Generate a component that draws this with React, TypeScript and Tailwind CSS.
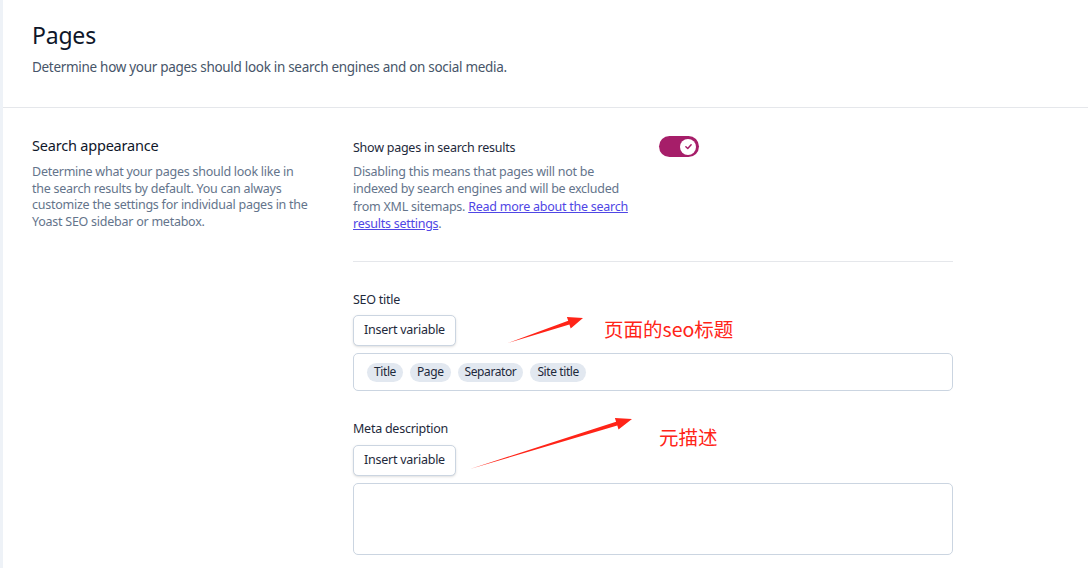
import React from "react";

const Pill = ({ label }: { label: string }) => (
  <span className="rounded-full bg-[#e2e8f0] px-[7px] h-[19px] flex items-center text-[12px] tracking-[-0.4px] text-[#1e293b]">
    {label}
  </span>
);

const InsertButton = () => (
  <button className="h-[31px] px-[10px] rounded-[5px] border border-[#cbd5e1] bg-white text-[12.5px] tracking-[-0.25px] text-[#1e293b] shadow-sm">
    Insert variable
  </button>
);

const Toggle = () => (
  <div className="w-[40px] h-[21px] rounded-full bg-[#a61e69] flex items-center justify-end px-[3px] shrink-0">
    <div className="w-[16px] h-[16px] rounded-full bg-white flex items-center justify-center">
      <svg width="9" height="9" viewBox="0 0 12 12" fill="none">
        <path d="M2.5 6.3 L5 8.6 L9.5 3.6" stroke="#a61e69" strokeWidth="2" strokeLinecap="round" strokeLinejoin="round" />
      </svg>
    </div>
  </div>
);

const Annotations = () => (
  <div className="absolute inset-0 pointer-events-none">
    <svg className="absolute left-0 top-0" width="1088" height="568">
      <polygon
        fill="#ff2418"
        points="508,343 568.2,320.8 566.9,317 583,318 570.7,328.4 569.4,324.6"
      />
      <polygon
        fill="#ff2418"
        points="470,469 616.1,421.8 614.9,418 632,419 618.5,429.4 617.3,425.6"
      />
    </svg>
    <div
      className="absolute left-[604px] top-[316px] text-[19.5px] leading-[26px] text-[#ff2418]"
      style={{ fontFamily: '"Noto Sans CJK SC", sans-serif' }}
    >
      页面的seo标题
    </div>
    <div
      className="absolute left-[659px] top-[424px] text-[19.5px] leading-[26px] text-[#ff2418]"
      style={{ fontFamily: '"Noto Sans CJK SC", sans-serif' }}
    >
      元描述
    </div>
  </div>
);

export default function App() {
  return (
    <div
      className="relative w-[1088px] h-[568px] overflow-hidden bg-white flex"
      style={{ fontFamily: '"Noto Sans", "Noto Sans CJK SC", sans-serif' }}
    >
      <div className="w-[3px] bg-[#eef2f7] shrink-0" />
      <div className="flex-1 flex flex-col">
        <header className="pl-[29px] pt-[19px] pb-[30px] border-b border-[#e5e7eb]">
          <h1 className="text-[23px] leading-[32px] tracking-[-0.2px] text-[#0f172a]">Pages</h1>
          <p className="mt-[6px] text-[13.5px] leading-[20px] tracking-[-0.3px] text-[#475569]">
            Determine how your pages should look in search engines and on social media.
          </p>
        </header>

        <section className="flex pl-[29px] pt-[26px]">
          <div className="w-[280px] shrink-0">
            <h2 className="text-[14.5px] leading-[22px] tracking-[-0.2px] text-[#0f172a]">Search appearance</h2>
            <p className="mt-[8px] text-[12.5px] leading-[16.6px] tracking-[-0.25px] text-[#64748b]">
              Determine what your pages should look like in the search results by default. You can always
              customize the settings for individual pages in the Yoast SEO sidebar or metabox.
            </p>
          </div>

          <div className="ml-[41px] w-[600px]">
            <div className="flex items-start pt-[5px]">
              <div className="w-[285px]">
                <div className="text-[12.5px] leading-[18px] tracking-[-0.25px] text-[#1e293b]">
                  Show pages in search results
                </div>
                <p className="mt-[6px] text-[12.5px] leading-[17.3px] tracking-[-0.25px] text-[#64748b]">
                  Disabling this means that pages will not be indexed by search engines and will be excluded
                  from XML sitemaps.{" "}
                  <a href="#" className="text-[#4f46e5] underline">
                    Read more about the search results settings
                  </a>
                  .
                </p>
              </div>
              <div className="ml-[21px] mt-[-3px]">
                <Toggle />
              </div>
            </div>

            <div className="mt-[29px] border-t border-[#e5e7eb]" />

            <div className="mt-[29px]">
              <div className="text-[12.5px] leading-[18px] tracking-[-0.25px] text-[#1e293b]">SEO title</div>
              <div className="mt-[6px]">
                <InsertButton />
              </div>
              <div className="mt-[7px] h-[38px] rounded-[5px] border border-[#cbd5e1] flex items-center gap-[7px] px-[13px]">
                <Pill label="Title" />
                <Pill label="Page" />
                <Pill label="Separator" />
                <Pill label="Site title" />
              </div>
            </div>

            <div className="mt-[29px]">
              <div className="text-[12.5px] leading-[18px] tracking-[-0.25px] text-[#1e293b]">Meta description</div>
              <div className="mt-[7px]">
                <InsertButton />
              </div>
              <div className="mt-[7px] h-[72px] rounded-[5px] border border-[#cbd5e1]" />
            </div>
          </div>
        </section>
      </div>
      <Annotations />
    </div>
  );
}
